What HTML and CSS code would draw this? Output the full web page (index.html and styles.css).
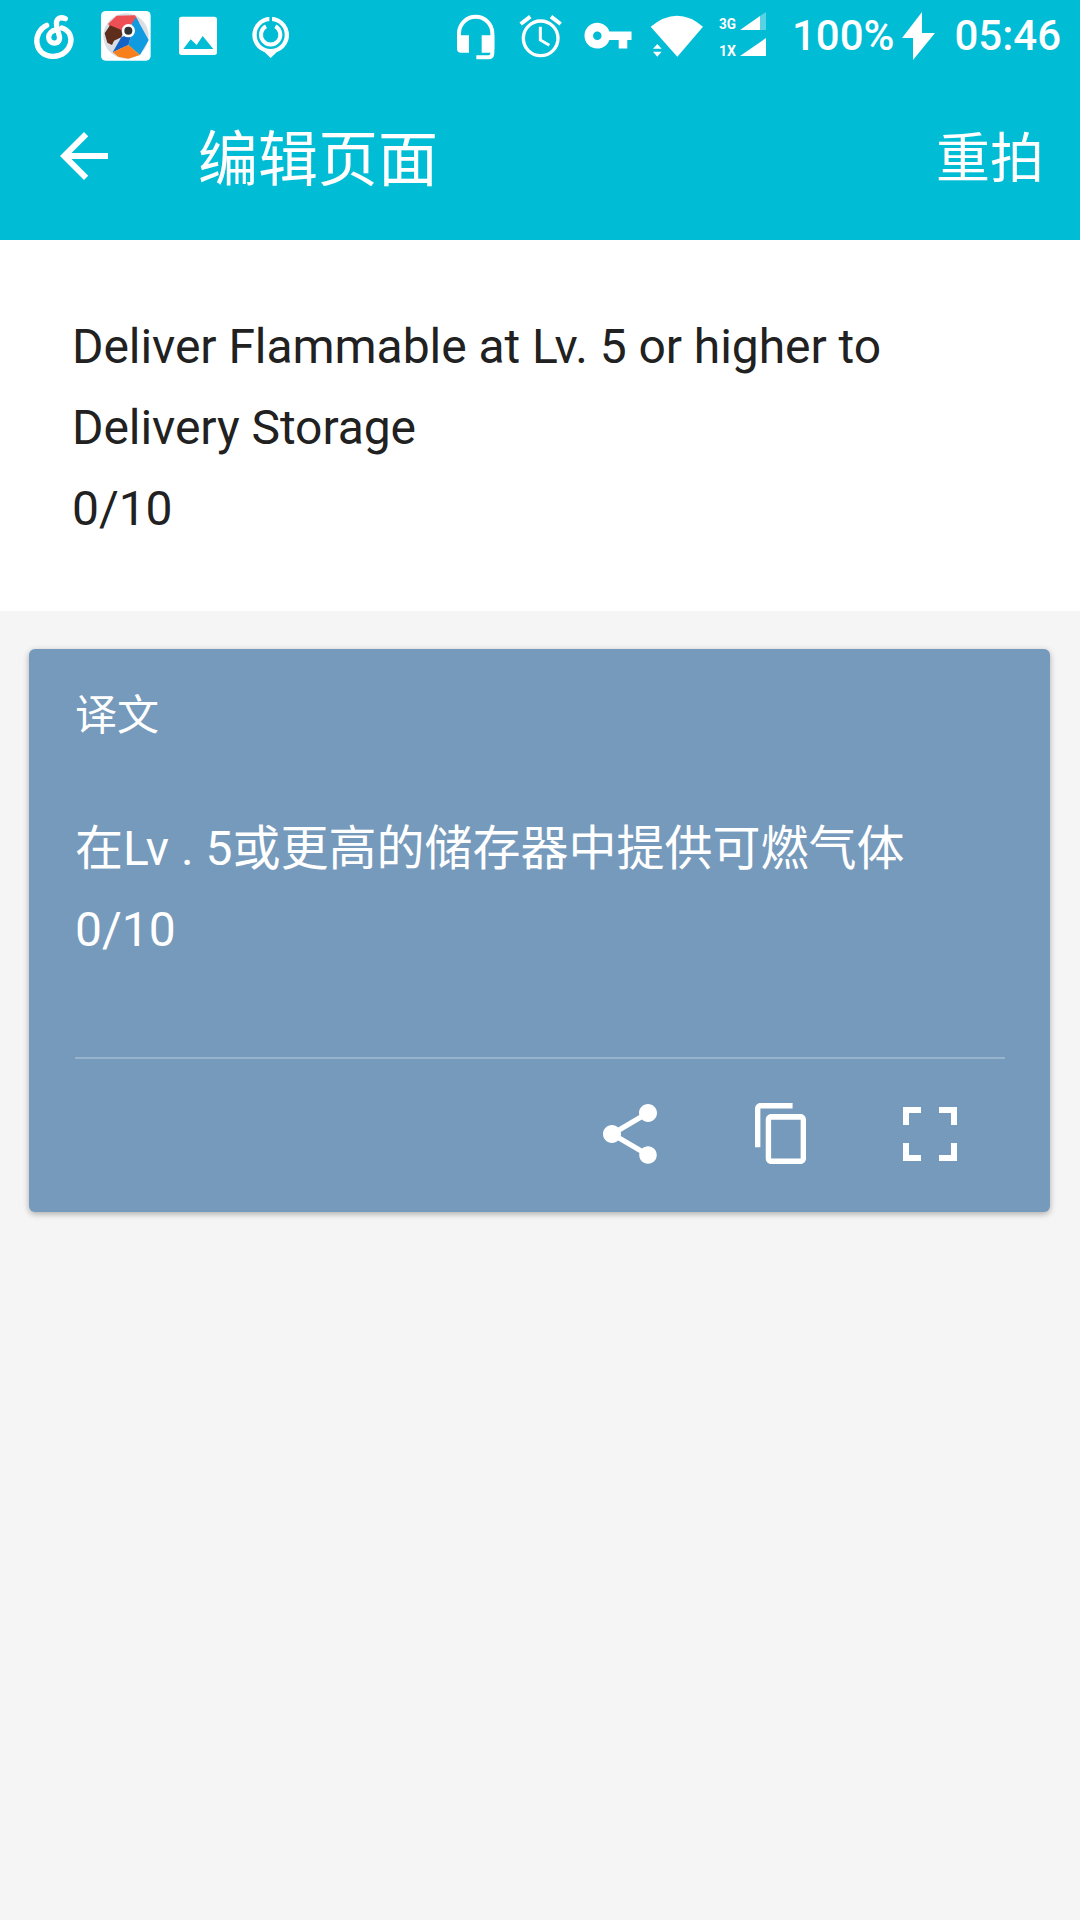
FILE: index.html
```html
<!DOCTYPE html>
<html lang="zh-CN">

<head>
  <meta charset="UTF-8" />
  <title>编辑页面</title>
  <link rel="stylesheet" href="styles.css">
</head>

<body>
  <header class="header">
    <div class="status-bar">
      <div class="status-left">
        <svg class="slot" viewBox="54 0 216 216" aria-hidden="true">
          <g fill="none" stroke="#fff" stroke-width="16" stroke-linecap="round">
            <path d="M140 76C96 96 100 170 160 169C216 168 232 98 186 84" />
            <path d="M196 56C178 48 166 58 170 78L178 108C184 136 146 136 146 112C146 100 156 92 168 90" />
          </g>
        </svg>
        <svg class="slot" viewBox="270 0 216 216" aria-hidden="true">
          <rect x="303" y="33" width="149" height="149" rx="14" fill="#fff" />
          <circle cx="378" cy="108" r="68" fill="#d9dee4" />
          <path d="M324 72L350 47L405 46L418 68L395 72L370 92L332 82Z" fill="#ee4f55" />
          <path d="M314 100L330 76L370 92L364 112L342 122L336 135L322 128Z" fill="#5e2d1c" />
          <path d="M408 52L446 120L420 165L385 135L392 110L395 72Z" fill="#0f9be0" />
          <path d="M338 157L364 112L395 100L385 135Z" fill="#1463c4" />
          <path d="M338 157L385 135L420 165L385 176L355 170Z" fill="#f7801c" />
          <circle cx="385" cy="92" r="20" fill="#fff" />
          <circle cx="385" cy="92" r="12" fill="#333" />
        </svg>
        <svg class="slot" viewBox="486 0 216 216" aria-hidden="true">
          <rect x="537" y="50" width="114" height="115" rx="8" fill="#fff" />
          <path d="M550 147L572 118L590 135L608 108L640 147Z" fill="#00bcd4" />
        </svg>
        <svg class="slot" viewBox="702 0 216 216" aria-hidden="true">
          <path d="M812 174L794 157A55 55 0 1 1 830 157Z" fill="#fff" />
          <circle cx="812" cy="105" r="42" fill="#00bcd4" />
          <path d="M798 79A29 29 0 1 0 826 79" fill="none" stroke="#fff" stroke-width="12" />
          <rect x="808" y="48" width="8" height="20" fill="#00bcd4" />
        </svg>
      </div>
      <div class="status-right">
        <svg class="slot-narrow" viewBox="39 0 198 216" aria-hidden="true">
          <path d="M90 130V100A50 50 0 0 1 190 100V160Q190 172 178 172H142" fill="none" stroke="#fff" stroke-width="12" />
          <path d="M84 106H120V158H96Q84 158 84 146ZM158 106H196V146Q196 158 184 158H158Z" fill="#fff" />
        </svg>
        <svg class="slot-narrow" viewBox="237 0 198 216" aria-hidden="true">
          <g fill="none" stroke="#fff">
            <circle cx="335" cy="115" r="52" stroke-width="10" />
            <path d="M334 80V120L361 136" stroke-width="9" />
            <path d="M275 72L304 50M366 50L395 72" stroke-width="12" />
          </g>
        </svg>
        <svg class="slot-narrow" viewBox="435 0 198 216" aria-hidden="true">
          <path transform="translate(460 30) scale(6.42)" fill="#fff" d="M12.65 10C11.83 7.67 9.61 6 7 6c-3.31 0-6 2.69-6 6s2.69 6 6 6c2.61 0 4.83-1.67 5.65-4H17v4h4v-4h2v-4H12.65zM7 14c-1.1 0-2-.9-2-2s.9-2 2-2 2 .9 2 2-.9 2-2 2z" />
        </svg>
        <svg class="slot-narrow" viewBox="633 0 198 216" aria-hidden="true">
          <path d="M665 80Q745 14 822 80L745 170Z" fill="#fff" />
          <path d="M672 146L685 132L698 146ZM672 155L698 155L685 170Z" fill="#fff" />
        </svg>
        <svg class="signal" viewBox="0 0 54 72" aria-hidden="true">
          <text class="signal-label" x="0" y="29" textLength="17" lengthAdjust="spacingAndGlyphs">3G</text>
          <text class="signal-label" x="0" y="55.5" textLength="17" lengthAdjust="spacingAndGlyphs">1X</text>
          <path d="M21 30L41 30L41 16Z" fill="#fff" />
          <path d="M41 30H47V12L41 16Z" fill="#fff" opacity="0.35" />
          <path d="M21 56L47 38V56Z" fill="#fff" />
        </svg>
        <span class="battery">100%</span>
        <svg class="bolt" viewBox="0 0 33 72" aria-hidden="true">
          <path d="M20 12L0 38H11V60L33 33H20Z" fill="#fff" />
        </svg>
        <span class="clock">05:46</span>
      </div>
    </div>

    <div class="app-bar">
      <svg class="back" viewBox="0 0 24 24" aria-hidden="true">
        <path fill="#fff" d="M20 11H7.83l5.59-5.59L12 4l-8 8 8 8 1.41-1.41L7.83 13H20v-2z" />
      </svg>
      <h1 class="title">编辑页面</h1>
      <span class="action">重拍</span>
    </div>
  </header>

  <section class="source">
    Deliver Flammable at Lv. 5 or higher to<br>
    Delivery Storage<br>
    0/10
  </section>

  <main class="content">
    <div class="card">
      <div class="card-label">译文</div>
      <p class="card-text">在Lv . 5或更高的储存器中提供可燃气体<br>0/10</p>
      <div class="card-actions">
        <span class="card-action">
          <svg class="icon-share" viewBox="0 0 24 24" aria-hidden="true">
            <path fill="#fff" d="M18 16.08c-.76 0-1.44.3-1.96.77L8.91 12.7c.05-.23.09-.46.09-.7s-.04-.47-.09-.7l7.05-4.11c.54.5 1.25.81 2.04.81 1.66 0 3-1.34 3-3s-1.34-3-3-3-3 1.34-3 3c0 .24.04.47.09.7L8.04 9.81C7.5 9.31 6.79 9 6 9c-1.66 0-3 1.34-3 3s1.34 3 3 3c.79 0 1.5-.31 2.04-.81l7.12 4.16c-.05.21-.08.43-.08.65 0 1.61 1.31 2.92 2.92 2.92 1.61 0 2.92-1.31 2.92-2.92s-1.31-2.92-2.92-2.92z" />
          </svg>
        </span>
        <span class="card-action">
          <svg class="icon-copy" viewBox="2 1 19 22" preserveAspectRatio="none" aria-hidden="true">
            <path fill="#fff" d="M16 1H4c-1.1 0-2 .9-2 2v14h2V3h12V1zm3 4H8c-1.1 0-2 .9-2 2v14c0 1.1.9 2 2 2h11c1.1 0 2-.9 2-2V7c0-1.1-.9-2-2-2zm0 16H8V7h11v14z" />
          </svg>
        </span>
        <span class="card-action">
          <svg class="icon-full" viewBox="0 0 54 54" aria-hidden="true">
            <path fill="#fff" d="M0 0H18V6H6V18H0ZM36 0H54V18H48V6H36ZM0 36H6V48H18V54H0ZM48 36H54V54H36V48H48Z" />
          </svg>
        </span>
      </div>
    </div>
  </main>
</body>

</html>
```

FILE: styles.css
```css
* {
  box-sizing: border-box;
}

html,
body {
  height: 100%;
}

body {
  margin: 0;
  display: flex;
  flex-direction: column;
  font-family: Roboto, "Noto Sans CJK SC", sans-serif;
  background-color: #f5f5f5;
  color: #212121;
}

.header {
  background-color: #00bcd4;
  color: #fff;
}

.status-bar {
  display: flex;
  justify-content: space-between;
  height: 72px;
  padding-left: 18px;
}

.status-left,
.status-right {
  display: flex;
  align-items: center;
}

.slot {
  width: 72px;
  height: 72px;
}

.slot-narrow {
  width: 66px;
  height: 72px;
}

.signal {
  width: 54px;
  height: 72px;
  margin-left: 13px;
}

.signal-label {
  font-family: Roboto, sans-serif;
  font-size: 15.5px;
  font-weight: 700;
  fill: #fff;
}

.battery,
.clock {
  font-size: 42px;
  font-weight: 500;
  line-height: 72px;
}

.battery {
  margin-left: 19px;
}

.bolt {
  width: 33px;
  height: 72px;
  margin-left: 8px;
}

.clock {
  margin-left: 19px;
  margin-right: 19px;
}

.app-bar {
  display: flex;
  align-items: center;
  height: 168px;
  padding: 0 36px 0 48px;
}

.back {
  width: 72px;
  height: 72px;
}

.title {
  flex: 1;
  margin: 0 0 4px 78px;
  font-size: 60px;
  font-weight: 400;
}

.action {
  margin-bottom: 4px;
  font-size: 54px;
}

.source {
  background-color: #fff;
  padding: 66px 72px 62px 72px;
  font-size: 48px;
  line-height: 81px;
  letter-spacing: -0.06px;
}

.content {
  flex: 1;
  padding: 38px 30px 0 29px;
}

.card {
  height: 563px;
  padding: 37px 45px 0 46px;
  border-radius: 6px;
  background-color: #769abb;
  box-shadow: 0 2px 6px rgba(0, 0, 0, 0.3);
  color: #fff;
}

.card-label {
  font-size: 42px;
  line-height: 60px;
}

.card-text {
  height: 249px;
  margin: 62px 0 0;
  font-size: 48px;
  line-height: 81px;
}

.card-actions {
  display: flex;
  justify-content: flex-end;
  height: 151px;
  border-top: 2px solid rgba(255, 255, 255, 0.25);
}

.card-action {
  display: flex;
  align-items: center;
  justify-content: center;
  width: 150px;
}

.icon-share {
  width: 72px;
  height: 72px;
}

.icon-copy {
  width: 51px;
  height: 61px;
}

.icon-full {
  width: 54px;
  height: 54px;
}
```
